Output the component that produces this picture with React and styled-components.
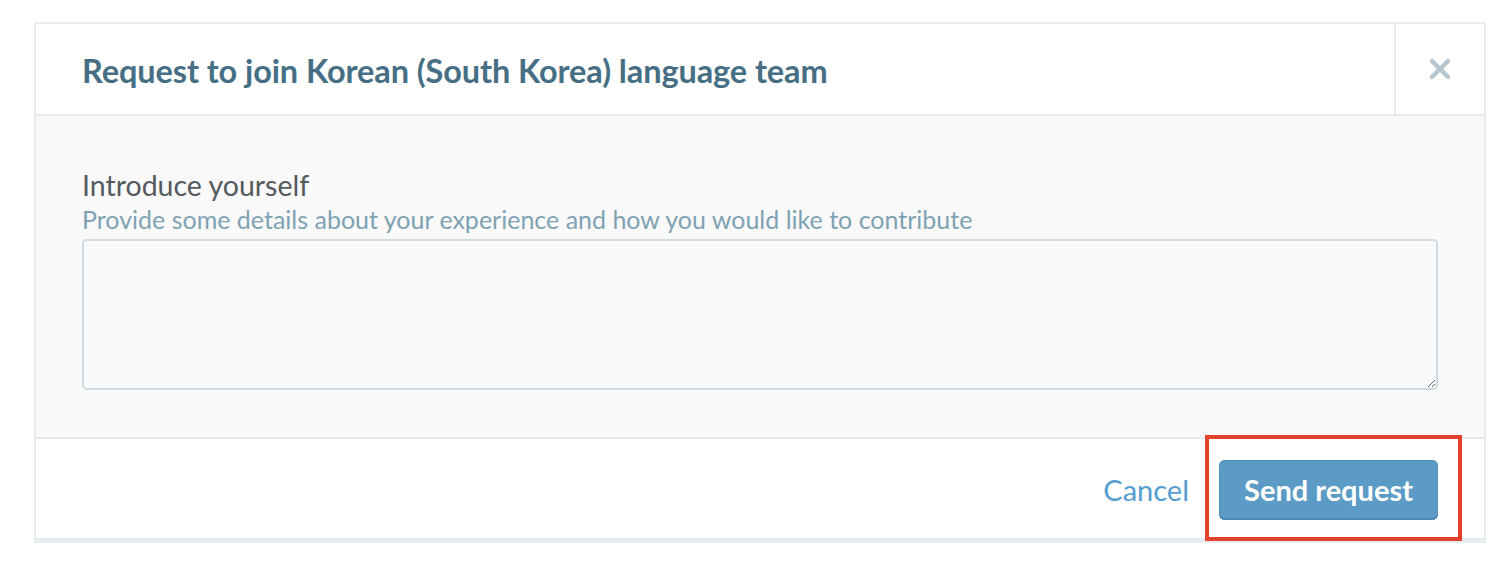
import styled, { createGlobalStyle } from "styled-components"

const Global = createGlobalStyle`
  body {
    margin: 0;
    background: #ffffff;
    font-family: Lato, "Open Sans", sans-serif;
  }
`

const Page = styled.div`
  padding: 22px 20px 30px 34px;
  position: relative;
`

const Modal = styled.div`
  width: 1452px;
  border: 2px solid #e4eaee;
  border-top-color: #e9eef1;
  box-sizing: border-box;
  background: #fff;
  box-shadow: 0 3px 0 #e8edf0;
`

const Header = styled.div`
  display: flex;
  height: 90px;
  border-bottom: 2px solid #e4eaee;
`

const Title = styled.h2`
  flex: 1;
  margin: 0;
  padding-left: 46px;
  padding-top: 3px;
  display: flex;
  align-items: center;
  font-size: 32.5px;
  font-weight: 700;
  letter-spacing: -0.1px;
  color: #466f85;
`

const Close = styled.button`
  width: 90px;
  border: 0;
  border-left: 2px solid #e4eaee;
  background: transparent;
  display: flex;
  align-items: center;
  justify-content: center;
  padding: 0;
`

const Body = styled.div`
  background: #f9f9f9;
  padding: 51px 46px 47px 46px;
  border-bottom: 2px solid #e6ebee;
`

const Label = styled.div`
  font-size: 28.5px;
  line-height: 37px;
  color: #555a5e;
`

const Hint = styled.div`
  font-size: 25px;
  line-height: 30px;
  color: #7fa2b3;
  margin-bottom: 5px;
`

const TextArea = styled.textarea`
  display: block;
  width: 100%;
  height: 151px;
  box-sizing: border-box;
  border: 2px solid #cfdbe2;
  border-radius: 5px;
  background: #fafafa;
  resize: vertical;
`

const Footer = styled.div`
  height: 99px;
  display: flex;
  align-items: center;
  justify-content: flex-end;
  gap: 30px;
  padding-right: 46px;
`

const Cancel = styled.button`
  border: 0;
  background: none;
  padding: 0;
  font-family: inherit;
  font-size: 29px;
  color: #559dd0;
  margin-top: 2px;
`

const Primary = styled.button`
  height: 60px;
  width: 219px;
  margin-top: 2px;
  border: 0;
  border-radius: 6px;
  background: #5b9bc6;
  box-shadow: inset 0 -2px 0 #4f8ab3, inset 0 0 0 1px #5290bb;
  color: #fff;
  font-family: inherit;
  font-size: 29px;
  font-weight: 700;
`

const Highlight = styled.div`
  position: absolute;
  left: 1205px;
  top: 435px;
  width: 257px;
  height: 106px;
  box-sizing: border-box;
  border: 4px solid #e2412c;
  pointer-events: none;
`

export default function App() {
  return (
    <Page>
      <Global />
      <Modal>
        <Header>
          <Title>Request to join Korean (South Korea) language team</Title>
          <Close aria-label="Close">
            <svg width="22" height="22" viewBox="0 0 22 22">
              <path d="M3 3 L19 19 M19 3 L3 19" stroke="#b7c6ce" strokeWidth="4.5" strokeLinecap="round" />
            </svg>
          </Close>
        </Header>
        <Body>
          <Label>Introduce yourself</Label>
          <Hint>Provide some details about your experience and how you would like to contribute</Hint>
          <TextArea />
        </Body>
        <Footer>
          <Cancel>Cancel</Cancel>
          <Primary>Send request</Primary>
        </Footer>
      </Modal>
      <Highlight />
    </Page>
  )
}
